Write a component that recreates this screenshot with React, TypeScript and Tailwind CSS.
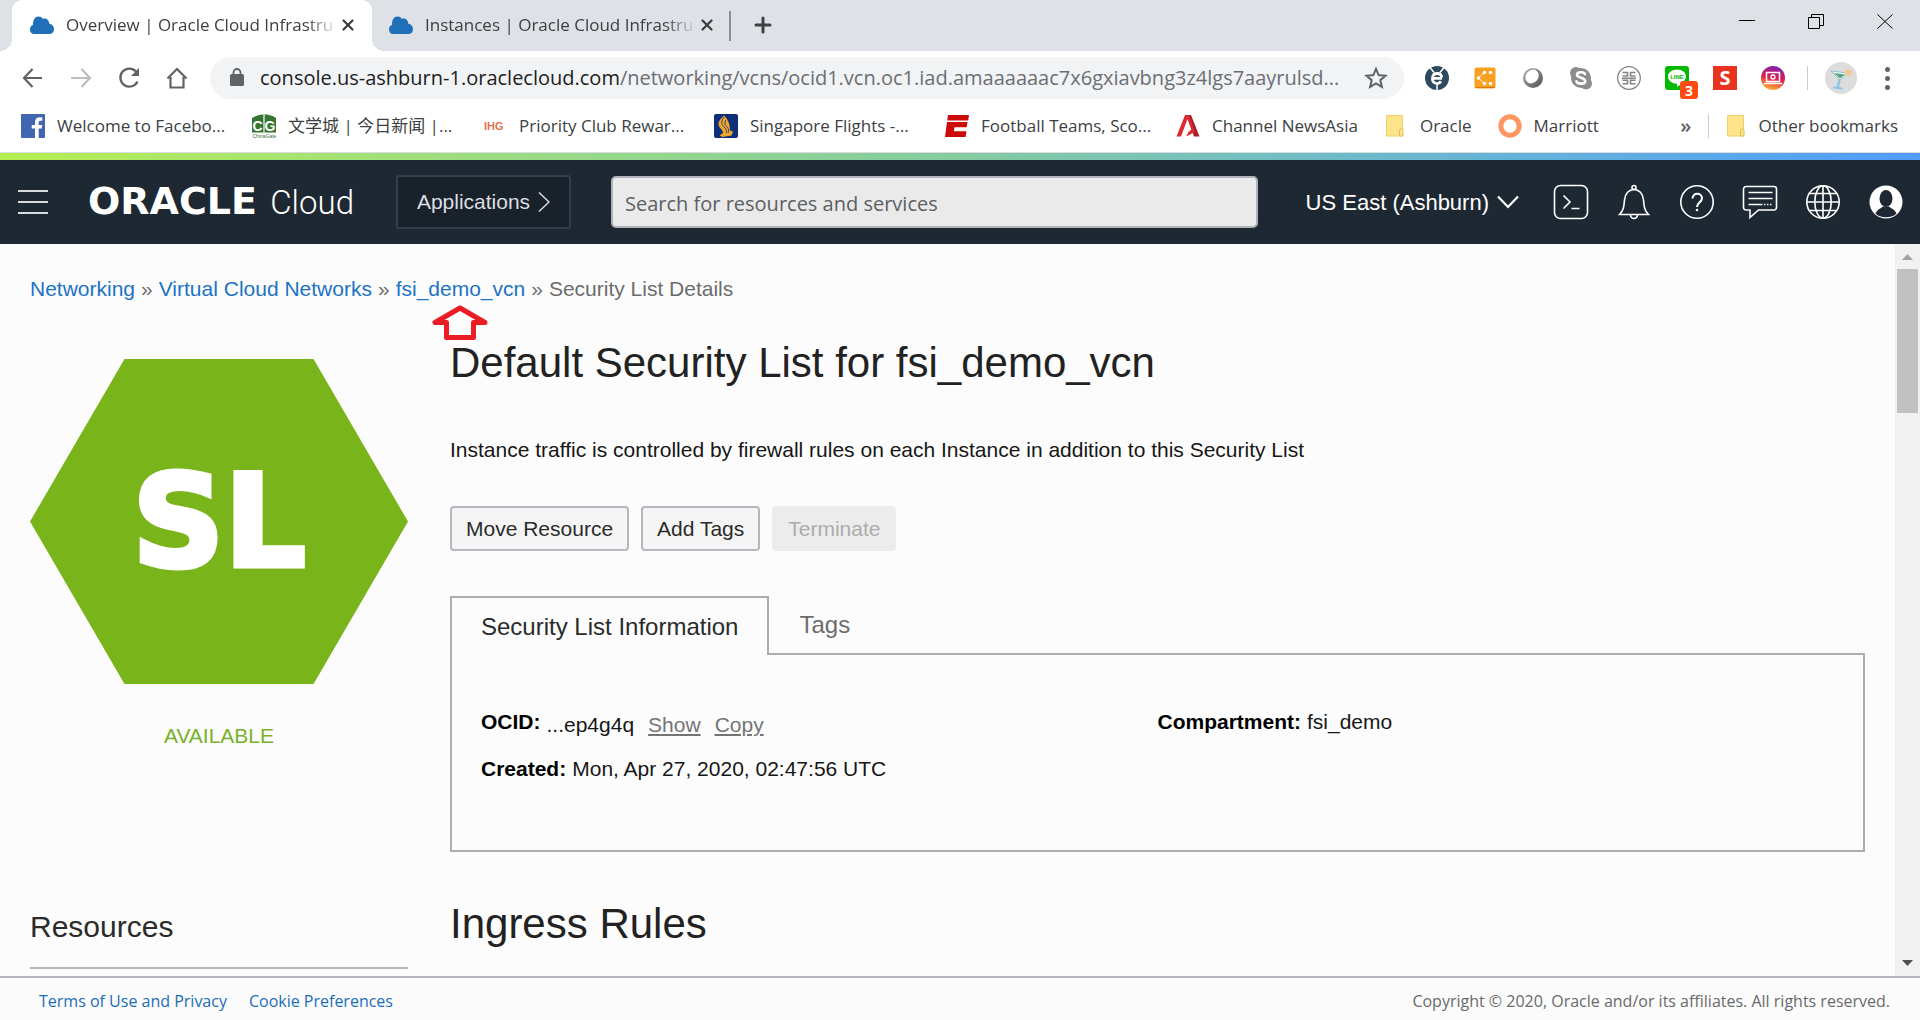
import React from "react";
import { Plus, X } from "lucide-react";

const UI = "font-['Open_Sans','Noto_Sans_CJK_SC',sans-serif]";

function CloudIcon() {
  return (
    <svg className="h-[18px] w-6 shrink-0" viewBox="0 0 24 16" preserveAspectRatio="none" fill="#1f70b8" aria-hidden="true">
      <path d="M4 16C1.500 16 0 14.200 0 12c0-2 1.200-3.400 3-3.900C2.800 3.500 5 .5 8.500.5c2 0 3.300.8 4.300 2 2.600-.9 6 .2 6.500 4.300C22 7 24 9 24 11.600 24 14.200 22.500 16 20 16Z" />
    </svg>
  );
}

function FolderIcon() {
  return (
    <svg className="h-6 w-6 shrink-0" viewBox="0 0 24 24" aria-hidden="true">
      <path d="M2.500 1.500h16v20.500h-16z" fill="#fde48b" stroke="#f0d069" />
      <path d="M15.500 22v-5.500a1.500 1.500 0 0 1 3.500 0V22z" fill="#fde48b" stroke="#e2bf52" />
    </svg>
  );
}

function FacebookIcon() {
  return (
    <svg className="h-6 w-6 shrink-0" viewBox="0 0 24 24" aria-hidden="true">
      <rect width="24" height="24" rx="1" fill="#4267b2" />
      <path d="M14 24v-9.500h-3.300v-3.600H14V8.200c0-3.200 2-4.900 4.800-4.900l2.500.1v3.300h-1.800c-1.500 0-1.800.8-1.800 1.800v2.400h3.500l-.5 3.600h-3V24z" fill="#fff" />
    </svg>
  );
}

function ChinaGateIcon() {
  return (
    <svg className="h-6 w-6 shrink-0" viewBox="0 0 24 24" aria-hidden="true">
      <path d="M0 4Q12-3.500 24 4V18.500H0Z" fill="#35752f" />
      <path d="M12 0v18.500" stroke="#fff" strokeWidth="1.200" />
      <text x="0.500" y="16.500" fontFamily="Liberation Sans" fontWeight="bold" fontSize="14" fill="#fff">C</text>
      <text x="12.500" y="16.500" fontFamily="Liberation Sans" fontWeight="bold" fontSize="14" fill="#fff">G</text>
      <text x="0.500" y="23.500" fontFamily="Liberation Sans" fontSize="5" fill="#35752f">ChinaGate</text>
    </svg>
  );
}

function IhgIcon() {
  return (
    <svg className="h-6 w-6 shrink-0" viewBox="0 0 24 24" aria-hidden="true">
      <text x="1" y="16" fontFamily="Liberation Sans" fontWeight="bold" fontSize="11" fill="#e27450">IHG</text>
    </svg>
  );
}

function SingaporeIcon() {
  return (
    <svg className="h-6 w-6 shrink-0" viewBox="0 0 24 24" aria-hidden="true">
      <rect width="24" height="24" rx="2" fill="#0d2e78" />
      <path d="M10 1.500C6 5 4 8 4.500 11c.5 3 5 5 4.500 8l-3.500 2.500 3 1.500 9-1.500 1.500-4-3-1c0-4-.5-10-6-15z" fill="#f1a52c" />
      <path d="M10 3c-3 4-3 7 0 10s3 4 2 6M12 6c-2 3-1 5 1 7s2 4 1 6" stroke="#0d2e78" fill="none" strokeWidth=".8" />
    </svg>
  );
}

function EspnIcon() {
  return (
    <svg className="h-6 w-6 shrink-0" viewBox="0 0 24 24" fill="#cc0a0a" aria-hidden="true">
      <path d="M3 1h21l-.8 5.500H2.200z" />
      <path d="M2 8h20.500l-.8 5.300H9.500l-.6 4h12.500L20.600 23H0z" />
    </svg>
  );
}

function CnaIcon() {
  return (
    <svg className="h-6 w-6 shrink-0" viewBox="0 0 24 24" aria-hidden="true">
      <path d="M10 1h5l8.500 21.500h-5.500z" fill="#a81d26" />
      <path d="M9 1h4l6 17-9 4.500 2.500-4.500L16 15 11.500 5 5 22.500H.5z" fill="#dc2a32" />
    </svg>
  );
}

function MarriottIcon() {
  return (
    <svg className="h-6 w-6 shrink-0" viewBox="0 0 24 24" aria-hidden="true">
      <circle cx="12" cy="12" r="9.200" fill="none" stroke="#ff9662" strokeWidth="5" />
    </svg>
  );
}

const bookmarks: { label: string; icon: React.ReactNode; wide?: boolean }[] = [
  { label: "Welcome to Facebo...", icon: <FacebookIcon />, wide: true },
  { label: "文学城 | 今日新闻 |...", icon: <ChinaGateIcon />, wide: true },
  { label: "Priority Club Rewar...", icon: <IhgIcon />, wide: true },
  { label: "Singapore Flights -...", icon: <SingaporeIcon />, wide: true },
  { label: "Football Teams, Sco...", icon: <EspnIcon />, wide: true },
  { label: "Channel NewsAsia", icon: <CnaIcon /> },
  { label: "Oracle", icon: <FolderIcon /> },
  { label: "Marriott", icon: <MarriottIcon /> },
];

function Tab({ title, active }: { title: string; active?: boolean }) {
  return (
    <div className={active ? "relative flex w-[360px] items-center rounded-t-[10px] bg-white pb-[2px] pl-[18px] pr-[14px]" : "flex w-[357px] items-center pb-[2px] pl-[17px] pr-[12px]"}>
      {active && (
        <>
          <span className="absolute bottom-0 -left-3 size-3 bg-[radial-gradient(circle_at_0_0,transparent_12px,white_12px)]" />
          <span className="absolute bottom-0 -right-3 size-3 bg-[radial-gradient(circle_at_100%_0,transparent_12px,white_12px)]" />
        </>
      )}
      <CloudIcon />
      <span className="ml-3 flex-1 whitespace-nowrap text-[17px] leading-6 text-[#3c4043] [mask-image:linear-gradient(to_right,black_88%,transparent)]">{title}</span>
      <button aria-label="Close tab" className="flex size-5 items-center justify-center text-[#3c4043]">
        <X size={18} strokeWidth={3} />
      </button>
    </div>
  );
}

function TabStrip() {
  return (
    <div className="flex h-[51px] bg-[#dee1e6] pl-3">
      <Tab title="Overview | Oracle Cloud Infrastru" active />
      <Tab title="Instances | Oracle Cloud Infrastru" />
      <div className="mt-[11px] h-[30px] w-[2px] bg-[#8b8e92]" />
      <button aria-label="New tab" className="ml-5 pb-[2px] text-[#3c4043]">
        <Plus size={24} strokeWidth={3} />
      </button>
      <div className="ml-auto mr-[27px] mt-[14px] flex h-4 gap-[53px] text-black">
        <button aria-label="Minimize">
          <svg width="16" height="16" viewBox="0 0 16 16" stroke="currentColor"><path d="M0 6.500h16" /></svg>
        </button>
        <button aria-label="Restore">
          <svg width="16" height="16" viewBox="0 0 16 16" fill="none" stroke="currentColor"><path d="M.5 3.500h11v11H.5zM3.500 3.500v-3h12v11h-4" /></svg>
        </button>
        <button aria-label="Close">
          <svg width="16" height="16" viewBox="0 0 16 16" fill="none" stroke="currentColor"><path d="M.5.500l15 14M15.500.500l-15 14" /></svg>
        </button>
      </div>
    </div>
  );
}

function Extensions() {
  const cls = "size-6";
  return (
    <div className="flex items-center gap-6">
      <button aria-label="Browser helper">
        <svg className={cls} viewBox="0 0 24 24">
          <circle cx="12" cy="12" r="12" fill="#2d4a5e" />
          <path d="M5 1.500l4 5M19 1.500l-4 5M12 18v6" stroke="#fff" strokeWidth="1.500" />
          <path d="M17 12.300H7.500a4.600 4.600 0 0 0 8.500 3M7.500 11.500a4.700 4.700 0 0 1 9.300 0" fill="none" stroke="#fff" strokeWidth="2.800" />
        </svg>
      </button>
      <button aria-label="Share">
        <svg className={cls} viewBox="0 0 24 24">
          <rect x="1.500" y="1.500" width="21" height="21" rx="2" fill="#f9a021" />
          <path d="M2 21.500h20" stroke="#d07c10" />
          <path d="M11 6.500L5.500 12l5.500 5.500" fill="none" stroke="#fff" strokeWidth="1" />
          <g fill="#fff"><circle cx="5.500" cy="12" r="1.800" /><circle cx="11.500" cy="6.500" r="1.800" /><circle cx="17.500" cy="6.500" r="1.800" /><circle cx="11.500" cy="17.500" r="1.800" /><circle cx="17.500" cy="17.500" r="1.800" /></g>
        </svg>
      </button>
      <button aria-label="Meetings">
        <svg className={cls} viewBox="0 0 24 24">
          <defs><linearGradient id="ring" x1="0" y1="0" x2="1" y2="1"><stop offset="0" stopColor="#b5b5b5" /><stop offset="1" stopColor="#4e4e4e" /></linearGradient></defs>
          <circle cx="12" cy="12" r="10" fill="url(#ring)" />
          <ellipse cx="11" cy="10.500" rx="6.200" ry="7.300" transform="rotate(40 11 10.500)" fill="#fff" />
        </svg>
      </button>
      <button aria-label="Skype">
        <svg className={cls} viewBox="0 0 24 24">
          <g fill="#8c8c8c"><circle cx="12" cy="12" r="10" /><circle cx="7" cy="7" r="6" /><circle cx="17" cy="17.500" r="6" /></g>
          <path d="M16 8c-1-2.500-8-2.500-8 .8 0 3.600 8.200 2.200 8.200 6.200 0 3.500-7.700 3.300-8.700.3" fill="none" stroke="#fff" strokeWidth="2.600" strokeLinecap="round" />
        </svg>
      </button>
      <button aria-label="Grid">
        <svg className={cls} viewBox="0 0 24 24" fill="none" stroke="#858585">
          <circle cx="12" cy="12" r="11.300" strokeWidth="1.300" />
          <path d="M5.500 6.500h5v3.500h-5M18.500 6.500h-5v3.500h5M5 12.200h14M5.500 17.800h5v-3.500h-5M18.500 17.800h-5v-3.500h5" strokeWidth="1.600" />
        </svg>
      </button>
      <button aria-label="LINE, 3 new" className="relative">
        <svg className={cls} viewBox="0 0 24 24">
          <rect width="24" height="24" rx="3" fill="#00b900" />
          <path d="M12 3.500c5 0 9 3 9 7 0 4.200-5.500 8-9 10.500.3-1.800.3-3-.5-3.200C6.800 17.500 3 14.500 3 10.500c0-4 4-7 9-7z" fill="#fff" />
          <text x="12" y="13" textAnchor="middle" fontFamily="Liberation Sans" fontWeight="bold" fontSize="6" fill="#00b900">LINE</text>
        </svg>
        <span className="absolute left-[15px] top-[15px] flex h-[18px] w-[18px] items-center justify-center rounded-[3px] bg-[#fc4c14] text-[14px] font-bold text-white">3</span>
      </button>
      <button aria-label="S extension" className="flex size-6 items-center justify-center bg-[#e8331f] text-xl font-bold text-white">S</button>
      <button aria-label="Desktop Instagram">
        <svg className={cls} viewBox="0 0 24 24">
          <defs><linearGradient id="insta" x1=".6" y1="0" x2=".35" y2="1"><stop offset="0" stopColor="#7b1fb2" /><stop offset=".5" stopColor="#e0214d" /><stop offset="1" stopColor="#fdb52c" /></linearGradient></defs>
          <circle cx="12" cy="12" r="12" fill="url(#insta)" />
          <path d="M5.500 6.500h13v9h-13zM3 17.500h18" fill="none" stroke="#fff" strokeWidth="1.500" />
          <circle cx="12" cy="11" r="2" fill="none" stroke="#fff" strokeWidth="1.300" />
        </svg>
      </button>
    </div>
  );
}

function Toolbar() {
  return (
    <div className="flex h-[54px] items-center bg-white pl-[22px] pr-[30px] text-[#5f6368]">
      <div className="flex items-center gap-6">
        <button aria-label="Back">
          <svg className="size-6" viewBox="0 0 24 24" fill="none" stroke="currentColor" strokeWidth="2.200"><path d="M20 12H2M10.500 3L2 12l8.500 9" /></svg>
        </button>
        <button aria-label="Forward" className="text-[#bcbec1]">
          <svg className="size-6" viewBox="0 0 24 24" fill="none" stroke="currentColor" strokeWidth="2.200"><path d="M1 12h18M11.500 3l8.500 9-8.500 9" /></svg>
        </button>
        <button aria-label="Reload">
          <svg className="size-6" viewBox="0 0 24 24" fill="none" stroke="currentColor" strokeWidth="2.300"><path d="M19.500 15.500A9 9 0 1 1 18 5.500" /><path d="M21 2v8h-8z" fill="currentColor" stroke="none" /></svg>
        </button>
        <button aria-label="Home">
          <svg className="size-6" viewBox="0 0 24 24" fill="none" stroke="currentColor" strokeWidth="2.200"><path d="M1.500 12.500L11 3l9.500 9.500M4.500 11v10.500h13V11" /></svg>
        </button>
      </div>
      <div className="ml-5 flex h-[42px] min-w-0 flex-1 items-center rounded-full bg-[#f1f3f4] pl-5 pr-3">
        <svg className="h-5 w-[14px] shrink-0" viewBox="0 0 14 20" aria-hidden="true"><rect y="6" width="14" height="12" rx="1.500" fill="#5f6368" /><path d="M3.500 7V4.500a3.500 3.500 0 0 1 7 0V7" fill="none" stroke="#5f6368" strokeWidth="1.800" /></svg>
        <div className="ml-4 min-w-0 flex-1 whitespace-nowrap text-[20px] leading-7 text-[#6b6f74]">
          <span className="text-[#202124]">console.us-ashburn-1.oraclecloud.com</span>/networking/vcns/ocid1.vcn.oc1.iad.amaaaaaac7x6gxiavbng3z4lgs7aayrulsd...
        </div>
        <button aria-label="Bookmark this page">
          <svg className="size-8" viewBox="0 0 32 32" fill="none" stroke="#5f6368" strokeWidth="2"><path d="M16 6.800l2.600 6.300 6.900.6-5.200 4.500 1.600 6.700-5.900-3.600-5.900 3.600 1.600-6.700-5.200-4.500 6.900-.6z" /></svg>
        </button>
      </div>
      <div className="ml-[21px] flex items-center">
        <Extensions />
        <div className="ml-[22px] h-6 w-px bg-[#c8cacd]" />
        <button aria-label="Profile" className="ml-[17px] flex size-8 items-center justify-center rounded-full bg-[#dcdcdc]">
          <svg width="24" height="24" viewBox="0 0 24 24">
            <path d="M2 5l17 2-8 7z" fill="#e8f8f8" stroke="#8cc4d4" />
            <path d="M5 7l11 1.500-5 4z" fill="#5fa37e" />
            <path d="M10.500 13.500L9 21" stroke="#8cc4e8" strokeWidth="2.500" />
            <path d="M5 21.500l8 1" stroke="#8cc4e8" strokeWidth="2" strokeLinecap="round" />
            <circle cx="19.500" cy="6.500" r="3.300" fill="#f6c88b" />
          </svg>
        </button>
        <button aria-label="Browser menu" className="ml-7 flex w-[5px] flex-col gap-[4px]">
          <span className="size-[5px] rounded-full bg-[#5f6368]" />
          <span className="size-[5px] rounded-full bg-[#5f6368]" />
          <span className="size-[5px] rounded-full bg-[#5f6368]" />
        </button>
      </div>
    </div>
  );
}

function BookmarksBar() {
  return (
    <nav aria-label="Bookmarks" className="flex h-[48px] items-center border-b border-[#dadce0] bg-white pb-[6px] pl-[21px] pr-[22px] text-[17px] leading-6 text-[#3c4043]">
      <div className="flex min-w-0 items-center gap-[26px]">
        {bookmarks.map((b) => (
          <a key={b.label} href="#" className={b.wide ? "flex w-[205px] items-center gap-3 whitespace-nowrap" : "flex items-center gap-3 whitespace-nowrap"}>
            {b.icon}
            <span>{b.label}</span>
          </a>
        ))}
      </div>
      <button aria-label="More bookmarks" className="ml-auto text-xl font-semibold leading-6 text-[#5f6368]">»</button>
      <div className="ml-[17px] h-6 w-px bg-[#c8cacd]" />
      <a href="#" className="ml-4 flex items-center gap-[9px] whitespace-nowrap">
        <FolderIcon />
        Other bookmarks
      </a>
    </nav>
  );
}

function ConsoleHeader() {
  const icon = "size-9";
  return (
    <header className="flex h-[84px] items-center bg-[#1e2832] pl-[18px] pr-4 text-white">
      <button aria-label="Menu" className="flex w-[30px] flex-col gap-[9px]">
        <span className="h-[2px] bg-[#d8dade]" />
        <span className="h-[2px] bg-[#d8dade]" />
        <span className="h-[2px] bg-[#d8dade]" />
      </button>
      <a href="#" className="ml-10 flex w-[266px] items-baseline justify-between whitespace-nowrap">
        <span className="font-['DejaVu_Sans',sans-serif] text-[38px] font-bold leading-10">ORACLE</span>
        <span className="font-['Roboto',sans-serif] text-[33px] font-light leading-10">Cloud</span>
      </a>
      <button className="ml-[42px] flex h-[54px] w-[175px] items-center justify-center gap-2 rounded-[3px] border-2 border-[#343d49] bg-[#19212b] text-[21px] text-[#dcdee0]">
        Applications
        <svg width="12" height="22" viewBox="0 0 12 22" fill="none" stroke="currentColor" strokeWidth="1.500"><path d="M1 1.500l10 9.500L1 20.500" /></svg>
      </button>
      <input
        type="text"
        aria-label="Search for resources and services"
        placeholder="Search for resources and services"
        className="ml-10 h-[52px] w-[647px] rounded-[5px] border-2 border-[#aeb3ba] bg-[#eaeaea] px-3 pt-[2px] font-['Open_Sans',sans-serif] text-[20px] text-[#4c4f53] placeholder:text-[#5c5f63]"
      />
      <button className="ml-auto flex items-center gap-2 whitespace-nowrap text-[22px]">
        US East (Ashburn)
        <svg width="22" height="14" viewBox="0 0 22 14" fill="none" stroke="currentColor" strokeWidth="2.200"><path d="M1 1.500l10 10.500L21 1.500" /></svg>
      </button>
      <div className="ml-[34px] flex items-center gap-[27px]">
        <button aria-label="Cloud Shell">
          <svg className={icon} viewBox="0 0 36 36" fill="none" stroke="currentColor" strokeWidth="1.600"><rect x="1.500" y="1.500" width="33" height="33" rx="6" /><path d="M10.500 11.500l6.500 6.500-6.500 6.500M18.500 24.500h8" /></svg>
        </button>
        <button aria-label="Announcements">
          <svg className={icon} viewBox="0 0 36 36" fill="none" stroke="currentColor" strokeWidth="1.600"><circle cx="18" cy="3.500" r="2" /><path d="M3.500 30.500c4-4 4.500-8 5-14.500C9 9.500 13 5.500 18 5.500S27 9.500 27.500 16c.5 6.500 1 10.500 5 14.500zM14.500 31a3.500 3.500 0 0 0 7 0" /></svg>
        </button>
        <button aria-label="Help">
          <svg className={icon} viewBox="0 0 36 36" fill="none" stroke="currentColor" strokeWidth="1.600"><circle cx="18" cy="18" r="16.200" /><path d="M13.500 14.500c0-6.500 9.500-6 9.500-.3 0 3.800-5 4.300-5 8.800" strokeWidth="2" /><circle cx="18" cy="26" r="1.300" fill="currentColor" stroke="none" /></svg>
        </button>
        <button aria-label="Feedback">
          <svg className={icon} viewBox="0 0 36 36" fill="none" stroke="currentColor" strokeWidth="1.600"><path d="M4 2.500h28a2.500 2.500 0 0 1 2.500 2.500v18.500a2.500 2.500 0 0 1-2.500 2.500H16.500L8 33.500V26H4a2.500 2.500 0 0 1-2.500-2.500V5A2.500 2.500 0 0 1 4 2.500zM6.500 8.500h24M6.500 14.500h24M6.500 20.500h14" /><path d="M22 20.500h8" strokeDasharray="1.500 1.500" /></svg>
        </button>
        <button aria-label="Language">
          <svg className={icon} viewBox="0 0 36 36" fill="none" stroke="currentColor" strokeWidth="1.600"><circle cx="18" cy="18" r="16.200" /><ellipse cx="18" cy="18" rx="8.200" ry="16.200" /><path d="M18 1.500v33M1.800 18h32.400M4.500 9.500h27M4.500 26.500h27" /></svg>
        </button>
        <button aria-label="Profile">
          <svg className={icon} viewBox="0 0 36 36"><circle cx="18" cy="18" r="16.500" fill="#fff" /><ellipse cx="18" cy="14.500" rx="6.500" ry="8.500" fill="#1e2832" /><path d="M7.500 29.500c2-4.500 5.500-5 7.500-7h6c2 2 5.500 2.500 7.500 7-4 5-17 5-21 0z" fill="#1e2832" /></svg>
        </button>
      </div>
    </header>
  );
}

function ScrollBar() {
  return (
    <div aria-hidden="true" className="flex w-[25px] shrink-0 flex-col items-center bg-[#f1f1f1]">
      <svg className="mb-[9px] mt-[10px] shrink-0" width="11" height="6" viewBox="0 0 11 6" fill="#a3a3a3"><path d="M0 6h11L5.500 0z" /></svg>
      <div className="h-[144px] w-[21px] bg-[#c1c1c1]" />
      <svg className="mb-[10px] mt-auto shrink-0" width="11" height="6" viewBox="0 0 11 6" fill="#505050"><path d="M0 0h11L5.500 6z" /></svg>
    </div>
  );
}

function Breadcrumb() {
  const link = "text-[#1c73c4]";
  return (
    <nav aria-label="Breadcrumb" className="flex gap-[6px] text-[21px] leading-7 text-[#6c6c6c]">
      <a href="#" className={link}>Networking</a>
      <span>»</span>
      <a href="#" className={link}>Virtual Cloud Networks</a>
      <span>»</span>
      <span className="relative">
        <a href="#" className={link}>fsi_demo_vcn</a>
        <svg className="absolute left-1/2 top-full -translate-x-1/2" width="58" height="38" viewBox="0 0 58 38" fill="none" stroke="#ec1c24" strokeWidth="5" aria-hidden="true">
          <path d="M29 5L4 19.500h11.500V34.500h27V19.500H54z" strokeLinejoin="round" />
        </svg>
      </span>
      <span>»</span>
      <span>Security List Details</span>
    </nav>
  );
}

function DetailsPanel() {
  return (
    <section className="mt-[45px] flex flex-col">
      <div role="tablist" className="relative z-10 -mb-[2px] flex">
        <button role="tab" aria-selected="true" className="h-[59px] border-2 border-b-0 border-[#adadad] bg-[#fcfcfc] px-[29px] text-2xl text-[#2b2b2b]">Security List Information</button>
        <button role="tab" aria-selected="false" className="h-[57px] px-[30px] text-2xl text-[#6c6c6c]">Tags</button>
      </div>
      <div role="tabpanel" className="grid grid-cols-2 border-2 border-[#adadad] px-[29px] pb-[67px] pt-[53px] text-[21px] leading-7 text-[#161616]">
        <dl className="space-y-4">
          <div className="flex gap-[6px]">
            <dt className="font-bold text-black">OCID:</dt>
            <dd className="flex gap-[14px] pt-[3px]">
              <span>...ep4g4q</span>
              <a href="#" className="text-[#747474] underline underline-offset-2">Show</a>
              <a href="#" className="text-[#747474] underline underline-offset-2">Copy</a>
            </dd>
          </div>
          <div className="flex gap-[6px]">
            <dt className="font-bold text-black">Created:</dt>
            <dd>Mon, Apr 27, 2020, 02:47:56 UTC</dd>
          </div>
        </dl>
        <dl>
          <div className="flex gap-[6px]">
            <dt className="font-bold text-black">Compartment:</dt>
            <dd>fsi_demo</dd>
          </div>
        </dl>
      </div>
    </section>
  );
}

export default function App() {
  const button = "h-[45px] rounded-[4px] border-2 border-[#b4b8be] bg-[#f5f5f5] px-[14px] text-[#2b2b2b]";
  return (
    <div className="flex h-screen flex-col overflow-hidden bg-[#fcfcfc] font-['Liberation_Sans',Arial,sans-serif]">
      <div className={UI}>
        <TabStrip />
        <Toolbar />
        <BookmarksBar />
      </div>
      <div className="h-[7px] shrink-0 bg-linear-to-r from-[#b5ee50] via-[#84cba0] to-[#529cfc]" />
      <ConsoleHeader />
      <div className="flex min-h-0 flex-1">
        <main className="min-w-0 flex-1 overflow-hidden pl-[30px] pr-[30px] pt-[31px]">
          <Breadcrumb />
          <div className="mt-9 grid grid-cols-[378px_1fr] gap-x-[42px] gap-y-12">
            <div className="flex flex-col items-center pt-5">
              <div className="flex h-[325px] w-full items-center justify-center bg-[#78b41a] [clip-path:polygon(25%_0,75%_0,100%_50%,75%_100%,25%_100%,0_50%)]">
                <span className="font-['DejaVu_Sans',sans-serif] text-[128px] font-bold leading-none text-white [-webkit-text-stroke:5px_white]">SL</span>
              </div>
              <p className="mt-[38px] text-[21px] leading-7 text-[#78b12a]">AVAILABLE</p>
            </div>
            <div>
              <h1 className="text-[42px] leading-[48px] text-[#222]">Default Security List for fsi_demo_vcn</h1>
              <p className="mt-[49px] text-[21px] leading-7 text-[#161616]">Instance traffic is controlled by firewall rules on each Instance in addition to this Security List</p>
              <div className="mt-[42px] flex gap-3 text-[21px]">
                <button className={button}>Move Resource</button>
                <button className={button}>Add Tags</button>
                <button disabled className="h-[45px] rounded-[4px] bg-[#ececec] px-4 text-[#adadad]">Terminate</button>
              </div>
              <DetailsPanel />
            </div>
            <h2 className="mt-[9px] h-[60px] border-b-2 border-[#b4b8be] text-[30px] leading-9 text-[#2b2b2b]">Resources</h2>
            <h2 className="text-[42px] leading-[48px] text-[#222]">Ingress Rules</h2>
          </div>
        </main>
        <ScrollBar />
      </div>
      <footer className="flex h-11 shrink-0 items-center justify-between border-t-2 border-[#b2b8be] bg-[#fbfbfb] pl-[39px] pr-[30px] pt-[4px] font-['Open_Sans',sans-serif] text-[16px] leading-6">
        <div className="flex gap-[22px] text-[#1c6db8]">
          <a href="#">Terms of Use and Privacy</a>
          <a href="#">Cookie Preferences</a>
        </div>
        <p className="text-[#6a6a6a]">Copyright © 2020, Oracle and/or its affiliates. All rights reserved.</p>
      </footer>
    </div>
  );
}
